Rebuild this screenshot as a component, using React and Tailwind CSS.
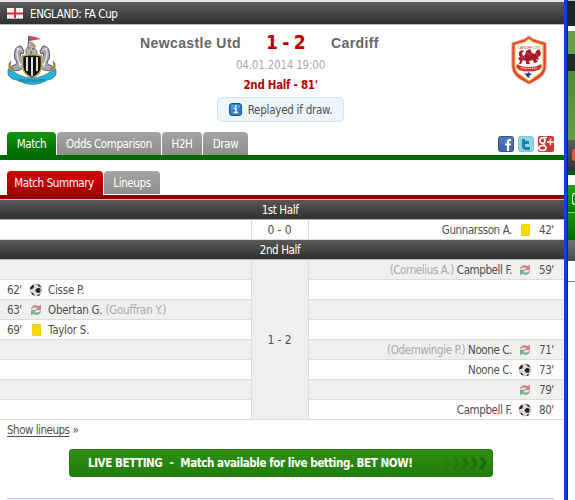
import React from 'react';
import clsx from 'clsx';

const firstHalf = [
  { side: 'away', min: "42'", type: 'card', player: 'Gunnarsson A.' },
];

const secondHalf = [
  { side: 'away', min: "59'", type: 'sub', player: 'Campbell F.', out: '(Cornelius A.)' },
  { side: 'home', min: "62'", type: 'goal', player: 'Cisse P.' },
  { side: 'home', min: "63'", type: 'sub', player: 'Obertan G.', out: '(Gouffran Y.)' },
  { side: 'home', min: "69'", type: 'card', player: 'Taylor S.' },
  { side: 'away', min: "71'", type: 'sub', player: 'Noone C.', out: '(Odemwingie P.)' },
  { side: 'away', min: "73'", type: 'goal', player: 'Noone C.' },
  { side: 'away', min: "79'", type: 'sub', player: '' },
  { side: 'away', min: "80'", type: 'goal', player: 'Campbell F.' },
];

const EnglandFlag = () => (
  <svg width="16" height="11" viewBox="0 0 16 11">
    <rect width="16" height="11" fill="#f6f3f3" />
    <path d="M8 0v11M0 5.5h16" stroke="#d8303a" strokeWidth="2" />
    <path d="M0 10.5h16" stroke="#b9b5b5" />
  </svg>
);

const NewcastleCrest = () => (
  <svg width="50" height="51" viewBox="0 0 50 51">
    {/* flag and castle */}
    <path d="M21.500 1v16" stroke="#555" strokeWidth="1" />
    <path d="M22 1q6 0 12 3q-6 1-12 2z" fill="#d6444f" />
    <path d="M22 3l6 1.500l-6 1.500z" fill="#5b70a8" />
    <path d="M19 21v-7l2-3v-4h3l1 3h3v4l2 2v5z" fill="#b5b3a6" stroke="#66665c" strokeWidth=".8" />
    <path d="M24 7l3 1-1 3z" fill="#c49a35" />
    <path d="M22 12v2M26 13v2M24 16v3" stroke="#4c4c45" />
    {/* sea horses */}
    <g id="horse">
      <path d="M8 16q1-5 6-5l3 5-1 3-3-1q0 4 4 5l1 6q-1 4-5 6l-6 1q-3-2-2-5 5-1 5-4-4-4-2-11z" fill="#a4a7ae" stroke="#565b65" strokeWidth="1" />
      <path d="M11 14q-2 5 0 10t2 8M14 22l6 2M12 28l6 4M10 13l4 2" stroke="#e7e8ea" strokeWidth="1.200" fill="none" />
      <path d="M7 35q-5-2-3-9l-2 2q-1 7 2 9z" fill="#bb9131" stroke="#7b5c1d" strokeWidth=".5" />
    </g>
    <use href="#horse" transform="translate(50 0) scale(-1 1)" />
    {/* shield */}
    <path d="M15.500 21q10-2.500 19 0v10q0 8-9.500 12q-9-4-9.500-12z" fill="#111" stroke="#c8a44b" strokeWidth="1.600" />
    <path d="M20 22v14M25 22v19M30 22v14" stroke="#f3f3ee" strokeWidth="1.800" />
    {/* ribbon */}
    <path d="M1 34q3 3 6 3l3 2q15 8 30 0l3-2q3 0 6-3v6l-3 3q-2 2-6 2q-14 9-30 0q-4 0-6-2l-3-3z" fill="#29b1da" stroke="#1683a5" strokeWidth=".7" />
    <text x="25" y="47" textAnchor="middle" fontSize="4" fill="#1a6f93" fontFamily="Liberation Sans" textLength="28">NEWCASTLE UNITED</text>
  </svg>
);

const CardiffCrest = () => (
  <svg width="36" height="50" viewBox="0 0 36 50">
    <path d="M18 1l4 3 13 4v24q-1 8-8 12l-9 5-9-5q-7-4-8-12V8l13-4z" fill="#e2412f" stroke="#f08874" strokeWidth="1" />
    <path d="M18 4l4 3 10 3v22q-1 6-7 9l-7 5-7-5q-6-3-7-9V10l10-3z" fill="#fff" stroke="#e9c13b" strokeWidth="1.200" />
    <text x="18" y="13.500" textAnchor="middle" fontSize="4" fill="#d34a43" fontFamily="Liberation Sans" textLength="23">CARDIFF CITY</text>
    <path d="M8 17l3-2 2 1-2 2 1 3 2-1 1-4 4-2 2 4 3 1 1-3 3-2 2 4-1 3-2 1 1 3-3-1 2 3-4 1-1-3-4 1 1 3h-4v-3l-3-1-2 4H8l1-3-2-3 2-1-1-2z" fill="#a51c2b" />
    <path d="M15 18l5 2M25 18l1 3M10 22l4 0" stroke="#d85c5c" strokeWidth=".7" />
    <path d="M6 29q4 3 12 3t12-3l1 3-3 3q-10 3-20 0l-3-3z" fill="#d93632" />
    <path d="M10 32.500q8 2 16 0" stroke="#f7c7bd" strokeWidth="1.200" strokeDasharray="1.500 .7" fill="none" />
    <path d="M18 36l-1 2-4 1 2 1 1 2 3 1-1-2 3-2-3-1z" fill="#263c88" />
  </svg>
);

const InfoIcon = () => (
  <svg width="13" height="13" viewBox="0 0 13 13">
    <rect x=".5" y=".5" width="12" height="12" rx="2.500" fill="#2b80c9" stroke="#175590" />
    <path d="M2 2h9v3q-5 0-9 2z" fill="#5fa9e2" opacity=".6" />
    <path d="M5 5.500h2v4M4.500 9.500h4.500M6 3h1.500" stroke="#fff" strokeWidth="1.300" fill="none" />
  </svg>
);

const BallIcon = () => (
  <svg width="14" height="14" viewBox="0 0 14 14">
    <circle cx="7" cy="7" r="6" fill="#e2dcd7" stroke="#a9a29d" strokeWidth=".6" />
    <path d="M1.200 4.500l2.500-2.700 1.500 1.400-1 2.300-3 1zM7.500 5.500l2.700-.7 1.600 2.200-1 2.700H8L6.300 7.700zM8 1l3 1 1.200 2.200-2.400-.7zM2 9.500l2 .5 1.500 2.500-2-.8zM8 12.800l1.500-1.500 2 .2-1.500 1.200z" fill="#29211f" />
  </svg>
);

const SubIcon = () => (
  <svg width="12" height="12" viewBox="0 0 12 12">
    <path d="M.8 5.500q.5-4 4.700-4.500L8.500 2 11 .8v5.400H5.500L7.500 4Q4 2.500.8 5.500z" fill="#cf8388" />
    <path d="M11.200 6.500q-.5 4-4.700 4.500L3.500 10 1 11.200V5.800h5.500L4.500 8Q8 9.500 11.200 6.500z" fill="#7bb094" />
  </svg>
);

const CardIcon = () => <span className="block h-3 w-[9px] rounded-[1px] border border-[#ecce20] bg-[#f8d900]" />;

const EventIcon = ({ type }) => (
  <span className="flex w-[14px] shrink-0 items-center justify-center">
    {type === 'goal' && <BallIcon />}
    {type === 'sub' && <SubIcon />}
    {type === 'card' && <CardIcon />}
  </span>
);

const SocialIcons = () => (
  <div className="flex gap-1 pr-[10px] pt-1">
    <svg width="16" height="16" viewBox="0 0 16 16">
      <rect x=".5" y=".5" width="15" height="15" rx="2" fill="#4267a8" stroke="#34548e" />
      <path d="M1 1h14v6L1 9z" fill="#6485bd" opacity=".5" />
      <path d="M13 4h-1.500Q10 4 10 5.500V15M7 8.500h6" stroke="#fff" strokeWidth="2.200" fill="none" />
    </svg>
    <svg width="16" height="16" viewBox="0 0 16 16">
      <rect x=".5" y=".5" width="15" height="15" rx="2" fill="#8fd7e5" stroke="#7cc5d5" />
      <path d="M5.500 3v7q0 2.500 2.500 2.500h4M5.500 6.500H11" stroke="#2380ad" strokeWidth="3" strokeLinejoin="round" fill="none" />
    </svg>
    <svg width="16" height="16" viewBox="0 0 16 16">
      <rect width="16" height="16" rx="2" fill="#c93a30" />
      <ellipse cx="4.500" cy="4.500" rx="2.500" ry="2.800" stroke="#fff" strokeWidth="1.600" fill="none" />
      <path d="M5 1.500h4M5 7l1.500 2M1 12q0-2.500 3.500-2.500T8 12t-3.500 2.500T1 12z" stroke="#fff" strokeWidth="1.600" fill="none" />
      <path d="M12.500 2.500v7M9 6h7" stroke="#fff" strokeWidth="1.400" />
    </svg>
  </div>
);

const Tab = ({ className, children }) => (
  <div className={clsx('flex items-center justify-center rounded-t-[4px] pt-[2px] text-white', className)}>{children}</div>
);

const grayTab = 'h-[23px] bg-gradient-to-b from-[#a3a5a3] to-[#8d8f8d]';

const StageBar = ({ children }) => (
  <div className="flex h-5 items-center justify-center border-b border-[#b5b5b5] bg-gradient-to-b from-[#595959] to-[#303030] pr-1 pt-[2px] text-white">
    {children}
  </div>
);

const EventCell = ({ event, side, shade }) => (
  <div className={clsx('flex h-5 items-center border-b border-[#dcdcdc]', shade ? 'bg-[#efefef]' : 'bg-white', side === 'away' && 'justify-end')}>
    {event.side === side && side === 'home' && (
      <>
        <span className="w-[29px] pl-[7px] pt-[2px]">{event.min}</span>
        <EventIcon type={event.type} />
        <span className="pl-[5px] pt-[2px] tracking-[-0.25px]">{event.player}</span>
        {event.out && <span className="pl-[3px] pt-[2px] tracking-[-0.25px] text-[#aaa]">{event.out}</span>}
      </>
    )}
    {event.side === side && side === 'away' && (
      <>
        {event.out && <span className="pr-[3px] pt-[2px] text-[#aaa]">{event.out}</span>}
        <span className="pr-[6px] pt-[2px]">{event.player}</span>
        <EventIcon type={event.type} />
        <span className="w-8 pl-[7px] pt-[2px]">{event.min}</span>
      </>
    )}
  </div>
);

const Half = ({ events, score, shaded }) => (
  <div className="grid grid-cols-[251px_58px_1fr]">
    <div>
      {events.map((e, i) => <EventCell key={i} event={e} side="home" shade={shaded && i % 2 === 0} />)}
    </div>
    <div className={clsx('flex items-center justify-center border-x border-b border-[#dcdcdc] pt-px pr-px text-[12px] tracking-[-0.1px]', shaded ? 'bg-[#efefef]' : 'bg-white')}>
      {score}
    </div>
    <div>
      {events.map((e, i) => <EventCell key={i} event={e} side="away" shade={shaded && i % 2 === 0} />)}
    </div>
  </div>
);

// Strip of the neighbouring window behind the popup
const BackWindow = () => (
  <div className="flex h-full w-[7px] flex-col overflow-hidden bg-white">
    <div className="h-px bg-[#bbb]" />
    <div className="h-[25px] bg-[#1e2427]" />
    <div className="h-[5px] bg-white" />
    <div className="h-[23px] bg-[#6b9b4c]" />
    <div className="h-[17px] bg-[#24282a]" />
    <div className="h-[69px] bg-gradient-to-b from-[#55883b] to-[#659a46]" />
    <div className="flex h-[30px] items-center justify-end bg-gradient-to-b from-[#5b5b5b] to-[#333]">
      <div className="h-3 w-[3px] rounded-l-full bg-[#e05548]" />
    </div>
    <div className="h-[5px] bg-[#07541a]" />
    <div className="h-[10px] bg-white" />
    <div className="flex h-7 items-center justify-end border-b border-[#8fc68a] bg-gradient-to-b from-[#25a218] to-[#087b05]">
      <div className="h-3 w-[3px] rounded-l-full border border-r-0 border-white" />
    </div>
    <div className="h-[27px] bg-gradient-to-b from-[#17920f] to-[#056403]" />
    <div className="h-[21px] bg-gradient-to-b from-[#727272] to-[#4b4b4b]" />
    <div className="h-5 bg-white" />
    <div className="h-px bg-[#777]" />
  </div>
);

const App = () => {
  return (
    <div className="flex h-[500px] w-[575px] overflow-hidden bg-white font-['DejaVu_Sans_Condensed','DejaVu_Sans',sans-serif] text-[11.5px] leading-none tracking-[-0.4px] whitespace-nowrap text-[#505050] [font-stretch:condensed]">
      <div className="flex w-[564px] flex-col">
        <div className="h-[2px] bg-[#e5e7df]" />
        <div className="flex h-[23px] items-center border-b border-[#bbb] bg-gradient-to-b from-[#5e5e5e] to-[#303030] pl-[7px] text-white">
          <EnglandFlag />
          <span className="pl-[7px] pt-[3px]">ENGLAND: FA Cup</span>
        </div>

        {/* Match header */}
        <div className="flex h-[107px] justify-between pl-[7px] pr-[17px]">
          <div className="pt-[10px]"><NewcastleCrest /></div>
          <div className="flex w-[280px] flex-col items-center pr-[7px]">
            <div className="mt-[7px] flex h-[21px] w-full items-center font-['Liberation_Sans',sans-serif] text-[14px] font-bold tracking-[0.4px] text-[#666] [font-stretch:normal]">
              <span className="-ml-1 w-[100px] shrink-0">Newcastle Utd</span>
              <span className="w-[91px] shrink-0 text-center font-['DejaVu_Sans_Condensed','DejaVu_Sans',sans-serif] text-[19px] tracking-[-0.8px] text-[#b90000] [font-stretch:condensed]">1 - 2</span>
              <span>Cardiff</span>
            </div>
            <div className="mt-[7px] text-[#aaa] tracking-[-0.2px]">04.01.2014 19:00</div>
            <div className="mt-[8px] text-[11.5px] font-bold tracking-[-0.3px] text-[#b90000]">2nd Half - 81'</div>
            <div className="mt-[6px] flex h-[25px] w-[127px] shrink-0 items-center justify-center gap-[6px] rounded-[5px] border border-[#d3e3ee] bg-[#edf5fa]">
              <InfoIcon />
              <span className="pt-[3px] tracking-[-0.25px]">Replayed if draw.</span>
            </div>
          </div>
          <div className="pt-[10px]"><CardiffCrest /></div>
        </div>

        {/* Main tabs */}
        <div className="flex h-[28px] items-start justify-between border-b-[5px] border-[#006b00] pl-[7px]">
          <div className="flex gap-px">
            <Tab className="h-[23px] w-[49px] bg-gradient-to-b from-[#159510] to-[#006b00]">Match</Tab>
            <Tab className={clsx(grayTab, 'w-[104px]')}>Odds Comparison</Tab>
            <Tab className={clsx(grayTab, 'w-[40px]')}>H2H</Tab>
            <Tab className={clsx(grayTab, 'w-[45px]')}>Draw</Tab>
          </div>
          <SocialIcons />
        </div>

        {/* Sub tabs */}
        <div className="mt-[11px] flex h-[28px] gap-px border-b-4 border-[#8e0000] pl-[7px]">
          <Tab className="h-6 w-[96px] bg-gradient-to-b from-[#d80000] to-[#a00000] pr-[2px]">Match Summary</Tab>
          <Tab className={clsx(grayTab, 'w-[56px]')}>Lineups</Tab>
        </div>
        <div className="h-px bg-[#d9b3b3]" />

        <StageBar>1st Half</StageBar>
        <Half events={firstHalf} score="0 - 0" />
        <StageBar>2nd Half</StageBar>
        <Half events={secondHalf} score="1 - 2" shaded />

        <div className="flex h-[29px] items-start gap-[3px] pl-[7px] pt-[5px]">
          <a className="tracking-[-0.5px] underline underline-offset-2">Show lineups</a>
          <span>»</span>
        </div>

        <a className="ml-[69px] flex h-[28px] w-[424px] items-center justify-between rounded-[3px] border border-[#2b7b16] bg-gradient-to-b from-[#2f9112] to-[#227b09] pl-[18px] pr-[4px] text-[11.5px] font-bold text-white">
          <span className="flex gap-[7px] pt-px tracking-[-0.42px]">
            <span>LIVE BETTING</span>
            <span>-</span>
            <span>Match available for live betting. BET NOW!</span>
          </span>
          <svg width="46" height="14" viewBox="0 0 46 14">
            {[0, 1, 2, 3, 4].map((n) => (
              <path key={n} d={`M${n * 9 + 1} 1h4l4 6-4 6h-4l4-6z`} fill="#175b0a" opacity={0.12 + n * 0.14} />
            ))}
          </svg>
        </a>

        <div className="ml-[7px] mt-[21px] h-[2px] w-[547px] border-t border-[#c3cfe0] bg-[#edf3f8]" />
      </div>

      <div className="w-1 shrink-0 border-r border-[#001a9c] bg-[#0b43dd]" />
      <BackWindow />
    </div>
  );
};

export default App;
